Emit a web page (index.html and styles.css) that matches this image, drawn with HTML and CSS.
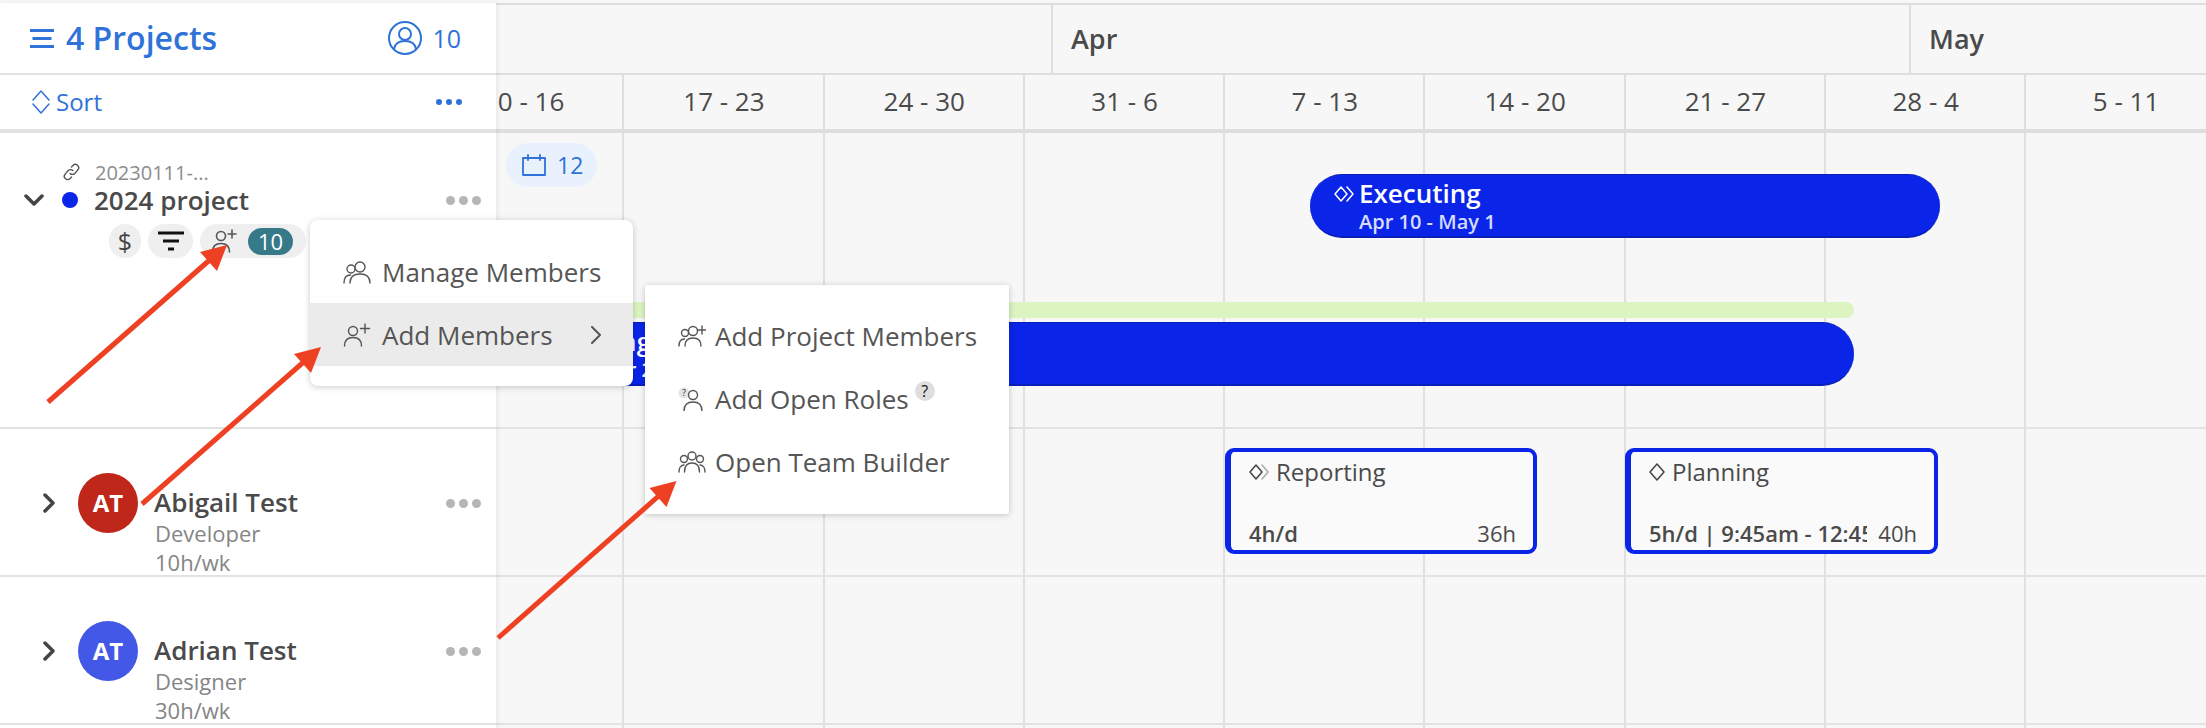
FILE: index.html
```html
<!DOCTYPE html>
<html lang="en">
<head>
<meta charset="utf-8">
<title>Projects</title>
<link rel="stylesheet" href="styles.css">
</head>
<body>
<div class="app">
  <aside class="side">
    <div class="side-head">
      <svg class="ic-menu" viewBox="0 0 24 19"><path d="M0 1.500h24M2.500 9.500h19M0 17.500h24"/></svg>
      <span class="side-title">4 Projects</span>
      <svg class="ic-user" viewBox="0 0 34 34"><circle cx="17" cy="17" r="16"/><circle cx="17" cy="13" r="6"/><path d="M6 28c1-6 5-8 11-8s10 2 11 8"/></svg>
      <span class="side-count">10</span>
    </div>
    <div class="side-sort">
      <svg class="ic-sort" viewBox="0 0 18 24"><path d="M1 10 9 1l8 9M1 14l8 9 8-9"/></svg>
      <span class="sort-label">Sort</span>
      <span class="dots dots-blue"><i></i><i></i><i></i></span>
    </div>
    <div class="side-project">
      <div class="proj-code">
        <svg class="ic-link" viewBox="0 0 18 20"><path d="M7.500 11.500a3.500 3.500 0 0 0 5 0l3-3.500a3.500 3.500 0 0 0-5-5l-1.500 1.700M10.500 8.500a3.500 3.500 0 0 0-5 0l-3 3.500a3.500 3.500 0 0 0 5 5l1.500-1.700"/></svg>
        <span>20230111-...</span>
      </div>
      <div class="proj-main">
        <svg class="ic-down" viewBox="0 0 20 12"><path d="M2 2l8 8 8-8"/></svg>
        <span class="proj-dot"></span>
        <span class="proj-name">2024 project</span>
        <span class="dots dots-grey"><i></i><i></i><i></i></span>
      </div>
      <div class="proj-pills">
        <span class="pill pill-dollar">$</span>
        <span class="pill pill-filter"><svg viewBox="0 0 26 20"><path d="M0 2h26M5 10h16M10 18h6"/></svg></span>
        <span class="pill pill-member">
          <svg class="ic-add" viewBox="0 0 26 24"><circle cx="10" cy="7" r="4.500"/><path d="M1.500 23c0-6 3.500-8.500 8.500-8.500s8.500 2.500 8.500 8.500M21 1v8M17 5h8"/></svg>
          <span class="badge">10</span>
        </span>
      </div>
    </div>
    <div class="side-person">
      <svg class="ic-right" viewBox="0 0 12 20"><path d="M2 2l8 8-8 8"/></svg>
      <span class="avatar avatar-red">AT</span>
      <div class="person-text">
        <div class="person-name">Abigail Test</div>
        <div class="person-sub">Developer</div>
        <div class="person-sub">10h/wk</div>
      </div>
      <span class="dots dots-grey dots-person"><i></i><i></i><i></i></span>
    </div>
    <div class="side-person">
      <svg class="ic-right" viewBox="0 0 12 20"><path d="M2 2l8 8-8 8"/></svg>
      <span class="avatar avatar-blue">AT</span>
      <div class="person-text">
        <div class="person-name">Adrian Test</div>
        <div class="person-sub">Designer</div>
        <div class="person-sub">30h/wk</div>
      </div>
      <span class="dots dots-grey dots-person"><i></i><i></i><i></i></span>
    </div>
  </aside>

  <main class="timeline">
    <div class="months">
      <div class="month month-mar"></div>
      <div class="month month-apr">Apr</div>
      <div class="month month-may">May</div>
    </div>
    <div class="weeks">
      <div class="week">10 - 16</div>
      <div class="week">17 - 23</div>
      <div class="week">24 - 30</div>
      <div class="week">31 - 6</div>
      <div class="week">7 - 13</div>
      <div class="week">14 - 20</div>
      <div class="week">21 - 27</div>
      <div class="week">28 - 4</div>
      <div class="week">5 - 11</div>
    </div>
    <div class="tl-body">
      <div class="cols">
        <i></i><i></i><i></i><i></i><i></i><i></i><i></i><i></i><i></i>
      </div>
      <div class="tl-row tl-row-project">
        <div class="cal-pill">
          <svg class="ic-cal" viewBox="0 0 24 22"><path d="M1 4h22v17H1zM6 1v5M18 1v5"/></svg>
          <span>12</span>
        </div>
        <div class="bar bar-exec">
          <div class="bar-title">
            <svg class="ic-phase" viewBox="0 0 20 16"><path d="M7 1 1 8l6 7 6-7zM13 1l6 7-6 7"/></svg>
            <span>Executing</span>
          </div>
          <div class="bar-sub">Apr 10 - May 1</div>
        </div>
        <div class="bar-green"></div>
        <div class="bar bar-main">
          <div class="bar-title">Designing</div>
          <div class="bar-sub">Feb 6 - Apr 2</div>
        </div>
      </div>
      <div class="tl-row tl-row-person">
        <div class="card card-report">
          <div class="card-top">
            <svg class="ic-phase-dark" viewBox="0 0 20 16"><path d="M7 1 1 8l6 7 6-7z"/><path class="faint" d="M13 1l6 7-6 7"/></svg>
            <span>Reporting</span>
          </div>
          <div class="card-bottom"><b>4h/d</b><span>36h</span></div>
        </div>
        <div class="card card-plan">
          <div class="card-top">
            <svg class="ic-phase-single" viewBox="0 0 16 18"><path d="M8 1 1 9l7 8 7-8z"/></svg>
            <span>Planning</span>
          </div>
          <div class="card-bottom"><b>5h/d | 9:45am - 12:45pm</b><span>40h</span></div>
        </div>
      </div>
      <div class="tl-row tl-row-person"></div>
      <div class="tl-rest"></div>
    </div>
  </main>
</div>

<div class="menu menu-main">
  <div class="menu-item">
    <svg class="ic-menuitem" viewBox="0 0 28 24"><circle cx="8" cy="9" r="4"/><circle cx="17" cy="7" r="5"/><path d="M1 23c0-5 2.500-8 6.500-8M7 23c0-6 4-9 10-9s10 3 10 9"/></svg>
    <span>Manage Members</span>
  </div>
  <div class="menu-item menu-item-on">
    <svg class="ic-menuitem" viewBox="0 0 28 24"><circle cx="10" cy="8" r="4.500"/><path d="M1.500 23c0-6 3.500-8.500 8.500-8.500s8.500 2.500 8.500 8.500M22 1v9M17.500 5.500h9"/></svg>
    <span>Add Members</span>
    <svg class="ic-next" viewBox="0 0 12 18"><path d="M2 1l8 8-8 8"/></svg>
  </div>
</div>

<div class="menu menu-sub">
  <div class="menu-item">
    <svg class="ic-menuitem" viewBox="0 0 28 24"><circle cx="7" cy="9" r="3.500"/><circle cx="15" cy="7" r="4.500"/><path d="M1 22c0-5 2-7 5.500-7M7 22c0-5 3-8 8-8s8 3 8 8M24 2v8M20 6h8"/></svg>
    <span>Add Project Members</span>
  </div>
  <div class="menu-item">
    <svg class="ic-menuitem" viewBox="0 0 28 24"><circle cx="6" cy="6" r="5.500" class="bubble"/><text x="6" y="9" class="q-small">?</text><circle cx="15" cy="8" r="4.500"/><path d="M6 24c0-6 3.500-9 9-9s9 3 9 9"/></svg>
    <span>Add Open Roles</span>
    <span class="help">?</span>
  </div>
  <div class="menu-item">
    <svg class="ic-menuitem" viewBox="0 0 28 24"><circle cx="6" cy="9" r="3.500"/><circle cx="14" cy="6" r="4"/><circle cx="22" cy="9" r="3.500"/><path d="M1 22c0-4 2-7 5-7M6.500 22c0-6 3-9 7.500-9s7.500 3 7.500 9M27 22c0-4-2-7-5-7"/></svg>
    <span>Open Team Builder</span>
  </div>
</div>

<svg class="arrows" viewBox="0 0 2206 728">
  <path class="arrow-line" d="M48 402 213 257"/>
  <polygon class="arrow-head" points="227,245 200,252 217,271"/>
  <path class="arrow-line" d="M142 504 307 359"/>
  <polygon class="arrow-head" points="321,347 294,354 311,373"/>
  <path class="arrow-line" d="M498 638 662 493"/>
  <polygon class="arrow-head" points="676.500,481 649.500,488 666.500,507"/>
</svg>
</body>
</html>
```
FILE: styles.css
```css
* { box-sizing: border-box; }
html, body { margin: 0; height: 100%; }
body {
  position: relative;
  width: 2206px;
  height: 728px;
  overflow: hidden;
  background: #f7f7f7;
  font-family: "Open Sans", "Noto Sans", sans-serif;
  color: #4a4a4a;
}
svg { display: block; fill: none; stroke-linecap: round; stroke-linejoin: round; }

.app { display: flex; height: 728px; padding-top: 3px; }

/* Sidebar */
.side {
  flex: 0 0 496px;
  position: relative;
  z-index: 2;
  background: #fff;
  box-shadow: 2px 0 4px rgba(0, 0, 0, .06);
}
.side-head {
  display: flex;
  align-items: center;
  height: 72px;
  padding: 0 35px 0 30px;
  border-bottom: 2px solid #e2e2e2;
  color: #2f72d8;
}
.ic-menu { width: 24px; height: 19px; stroke: #2f72d8; stroke-width: 3; stroke-linecap: butt; margin-right: 12px; }
.side-title { font-size: 32px; font-weight: 600; flex: 1; line-height: 40px; }
.ic-user { width: 34px; height: 34px; stroke: #2f72d8; stroke-width: 2; margin-right: 10px; }
.side-count { font-size: 25px; }

.side-sort {
  display: flex;
  align-items: center;
  height: 58px;
  padding: 0 34px 0 32px;
  border-bottom: 4px solid #e2e2e2;
  color: #2f72d8;
}
.ic-sort { width: 18px; height: 24px; stroke: #2f72d8; stroke-width: 1.500; margin-right: 6px; }
.sort-label { flex: 1; font-size: 24px; line-height: 32px; }

.dots { display: flex; gap: 5px; }
.dots i { display: block; border-radius: 50%; }
.dots-blue { gap: 4px; }
.dots-blue i { width: 6px; height: 6px; background: #2f72d8; }
.dots-grey { gap: 4px; }
.dots-grey i { width: 9px; height: 9px; background: #b6b6b6; }

.side-project {
  height: 296px;
  padding-top: 24px;
  border-bottom: 2px solid #e2e2e2;
}
.proj-code {
  display: flex;
  align-items: center;
  height: 30px;
  padding-left: 63px;
  font-size: 20px;
  color: #8c8c8c;
}
.ic-link { width: 17px; height: 20px; stroke: #555; stroke-width: 1.500; margin-right: 15px; }
.proj-main {
  display: flex;
  align-items: center;
  height: 36px;
  margin-top: -5px;
  padding: 0 15px 0 24px;
}
.ic-down { width: 20px; height: 12px; stroke: #444; stroke-width: 3.500; margin-right: 18px; }
.proj-dot { width: 16px; height: 16px; border-radius: 50%; background: #0a25e8; margin-right: 16px; }
.proj-name { flex: 1; font-size: 26px; font-weight: 600; line-height: 36px; }
.proj-pills {
  display: flex;
  gap: 7px;
  padding-left: 109px;
  margin-top: 6px;
}
.pill {
  display: flex;
  align-items: center;
  justify-content: center;
  height: 34px;
  border-radius: 17px;
  background: #efefef;
}
.pill-dollar { width: 32px; font-size: 25px; color: #444; }
.pill-filter { width: 45px; }
.pill-filter svg { width: 26px; height: 20px; stroke: #111; stroke-width: 3; stroke-linecap: butt; }
.pill-member { width: 106px; justify-content: flex-start; padding-left: 11px; gap: 11px; }
.ic-add { width: 26px; height: 24px; stroke: #555; stroke-width: 1.600; }
.badge {
  width: 45px;
  height: 27px;
  line-height: 27px;
  border-radius: 14px;
  background: #367a8a;
  color: #fff;
  font-size: 22px;
  text-align: center;
}

.side-person {
  display: flex;
  align-items: flex-start;
  height: 148px;
  overflow: hidden;
  padding: 44px 15px 0 43px;
  border-bottom: 2px solid #e2e2e2;
}
.ic-right { width: 12px; height: 20px; stroke: #444; stroke-width: 3.500; margin: 20px 23px 0 0; flex: none; }
.avatar {
  flex: none;
  width: 60px;
  height: 60px;
  line-height: 60px;
  border-radius: 50%;
  color: #fff;
  font-size: 24px;
  font-weight: 700;
  text-align: center;
}
.avatar-red { background: #c0271b; }
.avatar-blue { background: #4458e8; }
.person-text { flex: 1; padding-left: 16px; padding-top: 12px; }
.person-name { font-size: 26px; font-weight: 600; line-height: 34px; }
.person-sub { font-size: 22px; line-height: 29px; color: #858585; padding-left: 1px; }
.dots-person { margin-top: 26px; }

/* Timeline */
.timeline {
  flex: 1;
  min-width: 0;
  display: flex;
  flex-direction: column;
  overflow: hidden;
}
.months {
  display: flex;
  height: 72px;
  border-top: 2px solid #dedede;
  border-bottom: 2px solid #dedede;
  flex: none;
}
.month { font-size: 27px; font-weight: 600; line-height: 68px; padding-left: 18px; }
.month-mar { flex: 0 0 555px; }
.month-apr { flex: 0 0 858px; border-left: 2px solid #dedede; }
.month-may { flex: 1; border-left: 2px solid #dedede; }
.weeks {
  display: flex;
  height: 58px;
  flex: none;
  margin-left: -72px;
  border-bottom: 4px solid #dedede;
}
.week {
  flex: 0 0 200.300px;
  border-right: 2px solid #dedede;
  text-align: center;
  font-size: 26px;
  line-height: 52px;
  padding-left: 1px;
}
.tl-body { flex: 1; position: relative; }
.cols { position: absolute; top: 0; bottom: 0; left: -72px; display: flex; }
.cols i { display: block; flex: 0 0 200.300px; border-right: 2px solid #e0e0e0; }
.tl-row { position: relative; border-bottom: 2px solid #e2e2e2; }
.tl-row-project { height: 296px; }
.tl-row-person { height: 148px; }

.cal-pill {
  position: absolute;
  left: 10px;
  top: 10px;
  display: flex;
  align-items: center;
  gap: 11px;
  width: 91px;
  height: 44px;
  padding-left: 16px;
  border-radius: 22px;
  background: #e8f1fc;
  color: #2f72d8;
  font-size: 23px;
}
.ic-cal { width: 24px; height: 22px; stroke: #2f72d8; stroke-width: 1.800; }

.bar {
  position: absolute;
  height: 64px;
  border-radius: 32px;
  background: #0a25e8;
  border-top: 1px solid #0a1fb8;
  border-bottom: 2px solid #0a1fb8;
  color: #fff;
}
.bar-exec { left: 814px; top: 41px; width: 630px; padding: 2px 0 0 24px; }
.bar-main { left: 4px; top: 189px; width: 1354px; padding: 2px 0 0 28px; }
.bar-title { display: flex; align-items: center; gap: 5px; font-size: 26px; font-weight: 600; line-height: 33px; }
.bar-sub { font-size: 20px; line-height: 23px; color: #d5dcff; font-weight: 600; padding-left: 25px; }
.bar-main .bar-sub { padding-left: 6px; color: #fff; }
.ic-phase { width: 20px; height: 16px; stroke: #fff; stroke-width: 1.500; }
.bar-green {
  position: absolute;
  left: 4px;
  top: 169px;
  width: 1354px;
  height: 16px;
  border-radius: 8px;
  background: #dbf4c0;
}

.card {
  position: absolute;
  top: 19px;
  height: 106px;
  display: flex;
  flex-direction: column;
  justify-content: space-between;
  padding: 3px 17px 2px 18px;
  border: 4px solid #0a25e8;
  border-left-width: 6px;
  border-radius: 9px;
  background: #fafafa;
  font-size: 24px;
}
.card-report { left: 729px; width: 312px; }
.card-plan { left: 1129px; width: 313px; }
.card-top { display: flex; align-items: center; line-height: 34px; gap: 7px; }
.ic-phase-dark { width: 20px; height: 16px; stroke: #444; stroke-width: 1.500; }
.ic-phase-dark .faint { stroke: #aaa; }
.ic-phase-single { width: 16px; height: 18px; stroke: #444; stroke-width: 1.500; }
.card-bottom { display: flex; justify-content: space-between; gap: 11px; font-size: 22px; line-height: 30px; }
.card-bottom b { font-weight: 600; font-size: 22px; white-space: nowrap; overflow: hidden; min-width: 0; }
.card-bottom span { flex: none; }

/* Menus */
.menu {
  position: absolute;
  z-index: 5;
  padding: 20px 0;
  background: #fff;
  box-shadow: 0 1px 6px rgba(0, 0, 0, .22);
  color: #555;
  font-size: 26px;
}
.menu-main { left: 310px; top: 220px; width: 323px; border-radius: 8px; }
.menu-sub { left: 645px; top: 285px; width: 364px; padding: 19px 0 21px; z-index: 6; border-radius: 2px; }
.menu-item {
  display: flex;
  align-items: center;
  gap: 11px;
  height: 63px;
  padding-left: 33px;
  white-space: nowrap;
}
.menu-sub .menu-item { gap: 9px; }
.menu-item-on { background: #ebebeb; }
.ic-menuitem { flex: none; width: 28px; height: 24px; stroke: #555; stroke-width: 1.400; }
.bubble { fill: #e4e4e4; stroke: none; }
.q-small { font-size: 9px; text-anchor: middle; fill: #333; stroke: none; }
.ic-next { width: 12px; height: 18px; stroke: #555; stroke-width: 2; margin-left: auto; margin-right: 31px; }
.help {
  width: 20px;
  height: 20px;
  line-height: 20px;
  margin: -16px 0 0 -3px;
  border-radius: 50%;
  background: #dedede;
  color: #111;
  font-size: 16px;
  text-align: center;
}

/* Annotation arrows */
.arrows {
  position: absolute;
  left: 0;
  top: 0;
  width: 2206px;
  height: 728px;
  z-index: 10;
  pointer-events: none;
}
.arrow-line { stroke: #ee4023; stroke-width: 5; stroke-linecap: butt; }
.arrow-head { fill: #ee4023; }
```
